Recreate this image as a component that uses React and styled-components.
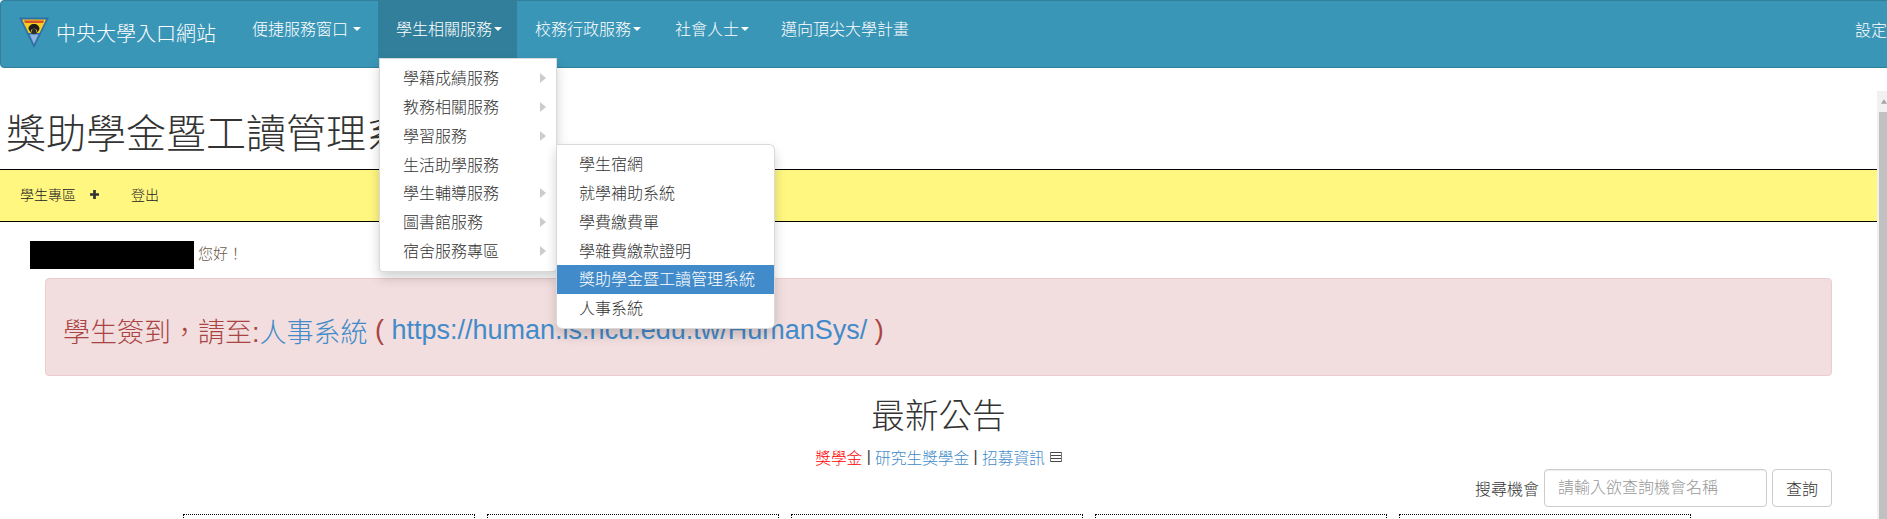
import React from "react";
import styled, { createGlobalStyle } from "styled-components";

const Global = createGlobalStyle`
  html, body { margin: 0; padding: 0; background: #fff; overflow: hidden; }
  body { font-family: "Liberation Sans", "Noto Sans CJK TC", sans-serif; font-weight: 300; color: #333; }
  * { box-sizing: border-box; }
`;
const Page = styled.div`width: 1887px; height: 519px; overflow: hidden; display: flex; flex-direction: column;`;
const Navbar = styled.nav`
  flex: none; width: 1903px; height: 68px; display: flex; align-items: flex-start;
  background: #3a96b7; border: 1px solid #317f9b; border-radius: 4px; color: #fff;
`;
const Brand = styled.a`
  width: 233px; height: 58px; padding-left: 18px; display: flex; align-items: center; gap: 7px;
  font-size: 20px; margin-top: 2px;
`;
const NavList = styled.ul`list-style: none; margin: -1px 0 0; padding: 0; display: flex;`;
const NavItem = styled.li`
  position: relative; height: 58px; width: ${p => p.$w}px; padding-left: 18px; display: flex; align-items: center; gap: ${p => p.$gap}px;
  font-size: 16px; white-space: nowrap; padding-bottom: 2px;
  background: ${p => (p.$active ? "#317f9b" : "transparent")};
`;
const Caret = styled.span`
  width: 0; height: 0; border-top: 4px solid #fff; border-left: 4px solid transparent; border-right: 4px solid transparent; margin-top: 2px;
`;
const Settings = styled.span`margin-left: auto; margin-top: 20px; width: 47px; font-size: 16px; white-space: nowrap; line-height: 20px;`;
const Menu = styled.ul`
  position: absolute; z-index: 5; list-style: none; margin: 0; padding: 5px 0; background: #fff; color: #333;
  border: 1px solid rgba(0,0,0,.15); box-shadow: 0 6px 12px rgba(0,0,0,.175);
  left: ${p => p.$left}px; top: ${p => p.$top}px; width: ${p => p.$w}px;
  border-radius: ${p => p.$radius};
`;
const MenuRow = styled.li`
  position: relative; height: 28.857px; line-height: 22.857px; padding: 4px 20px 2px 23px; font-size: 16px; white-space: nowrap;
  background: ${p => (p.$on ? "#428bca" : "transparent")}; color: ${p => (p.$on ? "#fff" : "#333")};
  &[data-sub] { padding-left: 22px; }
`;
const MenuArrow = styled.span`
  position: absolute; left: 160px; top: 9px; width: 0; height: 0;
  border-left: 6px solid #ccc; border-top: 5px solid transparent; border-bottom: 5px solid transparent;
`;
const Body = styled.div`flex: 1; min-height: 0; display: flex;`;
const Content = styled.main`flex: none; width: 1877px; display: flex; flex-direction: column;`;
const Heading = styled.h1`
  flex: none; margin: 46px 0 0; padding-left: 6px; height: 55px; font-size: 40px; font-weight: 300; line-height: 40px; color: #333; white-space: nowrap;
`;
const YellowBar = styled.div`
  flex: none; height: 53px; display: flex; align-items: center; padding: 0 0 3px 20px;
  background: #fff780; border-top: 1px solid #000; border-bottom: 1px solid #000; font-size: 14px; color: #222;
`;
const YellowLink = styled.a`display: flex; align-items: center; gap: 14px; margin-right: 32px;`;
const Greeting = styled.div`flex: none; display: flex; align-items: center; margin: 19px 0 0 30px; height: 28px; gap: 4px; font-size: 15px; color: #6b5a4a;`;
const Redacted = styled.span`width: 164px; height: 28px; background: #000;`;
const GreetingText = styled.span`padding-bottom: 6px;`;
const Alert = styled.div`
  flex: none; margin: 9px 45px 0 45px; height: 98px; padding: 6px 0 0 17px; display: flex; align-items: center;
  background: #f2dede; border: 1px solid #ebccd1; border-radius: 4px; color: #a94442; font-size: 27px; white-space: pre;
`;
const Link = styled.a`color: #428bca;`;
const Title = styled.h2`flex: none; margin: 22px 0 0; height: 38px; line-height: 38px; text-align: center; font-size: 33.6px; font-weight: 300; color: #333;`;
const Filters = styled.div`flex: none; margin-top: 10px; height: 22px; display: flex; justify-content: center; align-items: center; font-size: 15.7px; color: #333; white-space: pre;`;
const Hot = styled.a`color: #f00;`;
const ListIcon = styled.svg`margin-left: 5px;`;
const SearchRow = styled.div`flex: none; display: flex; justify-content: flex-end; align-items: center; gap: 5px; margin: 1px 45px 0 0; height: 38px; font-size: 16px; color: #333;`;
const SearchInput = styled.input`
  width: 223px; height: 38px; padding: 0 13px; border: 1px solid #ccc; border-radius: 4px; font: inherit; color: #333;
  box-shadow: inset 0 1px 1px rgba(0,0,0,.075);
  &::placeholder { color: #999; opacity: 1; }
`;
const SearchButton = styled.button`width: 60px; height: 38px; padding: 0; background: #fff; border: 1px solid #ccc; border-radius: 4px; font: inherit; color: #333;`;
const Cards = styled.div`flex: none; display: flex; gap: 12px; margin: 7px 0 0 183px;`;
const Card = styled.div`width: 292px; height: 200px; flex: none; border: 1px dotted #000;`;
const Scrollbar = styled.div`flex: none; width: 10px; margin-top: 23px; background: #f1f1f1; padding: 0 0 0 2px; display: flex; flex-direction: column;`;
const ScrollUp = styled.div`height: 21px; flex: none; display: flex; align-items: center; justify-content: center; padding-left: 2px;`;
const Thumb = styled.div`flex: 1; background: #c1c1c1;`;

const Logo = () => (
  <svg width="30" height="31" viewBox="0 0 30 31" style={{ flex: "none" }}>
    <path d="M0 .5h30L15 31z" fill="#2e6ea6" />
    <path d="M3 2.500h24L20.500 16h-11z" fill="#f4cf1f" />
    <path d="M5 3.500h20l-1 2.500H6z" fill="#d9502a" />
    <path d="M9.500 12c0-3 2.500-5 5.500-5s5.500 2 5.500 5l-2 3.500-1-3c-1-1-4-1-5 0l-1 3z" fill="#1d1d1d" />
    <path d="M13.500 12h3l1.500 4-3 1.500-3-1.500z" fill="#2a2a2a" />
    <path d="M10.500 17.500h9L15 27z" fill="#8fb2de" />
  </svg>
);

const navItems = [
  { t: "便捷服務窗口 ", w: 144, gap: 5, caret: true },
  { t: "學生相關服務", w: 139, gap: 2, caret: true, active: true },
  { t: "校務行政服務", w: 140, gap: 2, caret: true },
  { t: "社會人士", w: 106, gap: 2, caret: true },
  { t: "邁向頂尖大學計畫", w: 170 },
];
const mainRows = [["學籍成績服務", 1], ["教務相關服務", 1], ["學習服務", 1], ["生活助學服務", 0], ["學生輔導服務", 1], ["圖書館服務", 1], ["宿舍服務專區", 1]];
const subRows = ["學生宿網", "就學補助系統", "學費繳費單", "學雜費繳款證明", "獎助學金暨工讀管理系統", "人事系統"];

export default function App() {
  return (
    <Page>
      <Global />
      <Navbar>
        <Brand><Logo />中央大學入口網站</Brand>
        <NavList>
          {navItems.map(n => (
            <NavItem key={n.t} $w={n.w} $gap={n.gap} $active={n.active}>
              {n.t}{n.caret && <Caret />}
              {n.active && (
                <Menu $left={1} $top={58} $w={178} $radius="0 0 4px 4px">
                  {mainRows.map(([t, a]) => (
                    <MenuRow key={t}>{t}{a ? <MenuArrow /> : null}</MenuRow>
                  ))}
                </Menu>
              )}
              {n.active && (
                <Menu $left={178} $top={144} $w={219} $radius="0 6px 6px 6px">
                  {subRows.map((t, i) => <MenuRow key={t} data-sub $on={i === 4}>{t}</MenuRow>)}
                </Menu>
              )}
            </NavItem>
          ))}
        </NavList>
        <Settings>設定</Settings>
      </Navbar>
      <Body>
        <Content>
          <Heading>獎助學金暨工讀管理系統</Heading>
          <YellowBar>
            <YellowLink>學生專區
              <svg width="9" height="9" viewBox="0 0 10 10"><path d="M3.500 0h3v3.500H10v3H6.500V10h-3V6.500H0v-3h3.500z" fill="#333" /></svg>
            </YellowLink>
            <YellowLink>登出</YellowLink>
          </YellowBar>
          <Greeting><Redacted /><GreetingText>您好！</GreetingText></Greeting>
          <Alert>學生簽到，請至:<Link>人事系統</Link> ( <Link>https://human.is.ncu.edu.tw/HumanSys/</Link> )</Alert>
          <Title>最新公告</Title>
          <Filters>
            <Hot>獎學金</Hot> | <Link>研究生獎學金</Link> | <Link>招募資訊</Link>
            <ListIcon width="12" height="10" viewBox="0 0 12 10">
              <path d="M1 .5h10M1 3.500h10M1 6.500h10M1 9.500h10" stroke="#444" fill="none" />
              <path d="M.5 0v10M11.500 0v10" stroke="#777" fill="none" />
            </ListIcon>
          </Filters>
          <SearchRow>搜尋機會<SearchInput placeholder="請輸入欲查詢機會名稱" /><SearchButton>查詢</SearchButton></SearchRow>
          <Cards><Card /><Card /><Card /><Card /><Card /></Cards>
        </Content>
        <Scrollbar>
          <ScrollUp>
            <svg width="7" height="5" viewBox="0 0 7 5"><path d="M3.500 0L7 5H0z" fill="#a3a3a3" /></svg>
          </ScrollUp>
          <Thumb />
        </Scrollbar>
      </Body>
    </Page>
  );
}
